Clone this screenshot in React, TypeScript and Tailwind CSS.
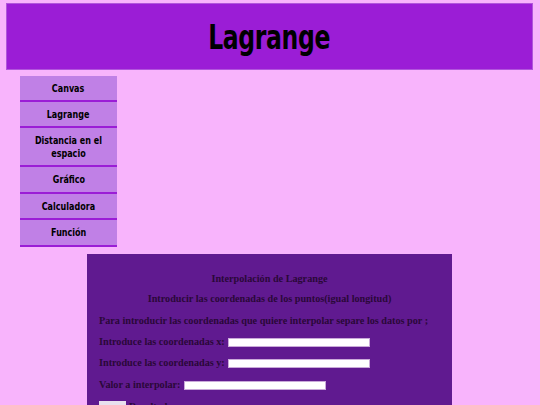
import React from "react";

const cond = { fontFamily: "'DejaVu Sans', sans-serif", fontStretch: "condensed" as const };

export default function App() {
  const items: { t: React.ReactNode; h: string; k: string }[] = [
    { k: "c", t: "Canvas", h: "h-[26px]" },
    { k: "l", t: "Lagrange", h: "h-[26px]" },
    { k: "d", t: <>Distancia en el<br />espacio</>, h: "h-[39px]" },
    { k: "g", t: "Gráfico", h: "h-[27px]" },
    { k: "ca", t: "Calculadora", h: "h-[26px]" },
    { k: "f", t: "Función", h: "h-[27px]" },
  ];
  return (
    <div className="w-[540px] h-[405px] overflow-hidden bg-[#f8b4fc] pt-[3px]">
      <header className="ml-[6px] mr-[7px] h-[67px] bg-[#9b1dd6] border border-[#b155dc] flex items-center justify-center">
        <h1 className="text-[34px] font-bold text-black leading-none scale-x-[0.77] tracking-[-0.5px]" style={cond}>Lagrange</h1>
      </header>
      <nav className="ml-[20px] mt-[6px] w-[97px] flex flex-col">
        {items.map((it) => (
          <div
            key={it.k}
            className={`bg-[#c080e6] border-b-2 border-[#9b1dd6] flex items-center justify-center text-center ${it.h}`}
          >
            <span className="text-[10.5px] font-bold text-black leading-[13px] whitespace-nowrap scale-x-[0.85]" style={cond}>
              {it.t}
            </span>
          </div>
        ))}
      </nav>
      <main
        className="ml-[87px] mt-[7px] w-[365px] h-[200px] bg-[#601a90] text-[#2a0838] font-bold text-[10.2px] px-[12px] pt-[19px]"
        style={{ fontFamily: "'Liberation Serif', 'Times New Roman', serif" }}
      >
        <p className="text-center leading-[12px]">Interpolación de Lagrange</p>
        <p className="text-center leading-[12px] mt-[8px]">Introducir las coordenadas de los puntos(igual longitud)</p>
        <p className="leading-[12px] mt-[10px] whitespace-nowrap">Para introducir las coordenadas que quiere interpolar separe los datos por ;</p>
        <div className="flex items-center mt-[9px] h-[12px]">
          <span>Introduce las coordenadas x:</span>
          <span className="ml-[3px] inline-block w-[142px] h-[9px] bg-white border border-[#c9a9d9]" />
        </div>
        <div className="flex items-center mt-[9px] h-[12px]">
          <span>Introduce las coordenadas y:</span>
          <span className="ml-[3px] inline-block w-[142px] h-[9px] bg-white border border-[#c9a9d9]" />
        </div>
        <div className="flex items-center mt-[10px] h-[12px]">
          <span>Valor a interpolar:</span>
          <span className="ml-[3px] inline-block w-[142px] h-[9px] bg-white border border-[#c9a9d9]" />
        </div>
        <div className="flex items-start mt-[8px] h-[12px]">
          <span className="inline-block w-[27px] h-[9px] bg-[#e8e0ee] mt-[2px]" />
          <span className="ml-[3px]">Resultado</span>
        </div>
      </main>
    </div>
  );
}
